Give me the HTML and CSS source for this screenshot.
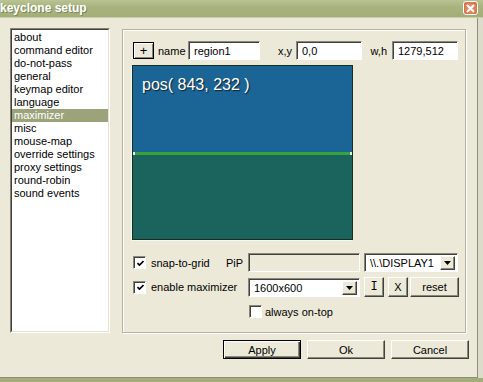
FILE: index.html
```html
<!DOCTYPE html>
<html>
<head>
    <title>keyclone setup</title>
    <link rel="stylesheet" href="styles.css">
</head>
<body>

<div class="window">
    <div class="titlebar">
        <span class="title">keyclone setup</span>
        <span class="close">
            <svg width="9" height="9" viewBox="0 0 9 9"><path d="M1 1 L8 8 M8 1 L1 8" stroke="#fff" stroke-width="2"/></svg>
        </span>
    </div>

    <div class="client">
        <div class="main">
            <div class="pages">
                <ul class="pages-inner">
                    <li>about</li>
                    <li>command editor</li>
                    <li>do-not-pass</li>
                    <li>general</li>
                    <li>keymap editor</li>
                    <li>language</li>
                    <li class="selected">maximizer</li>
                    <li>misc</li>
                    <li>mouse-map</li>
                    <li>override settings</li>
                    <li>proxy settings</li>
                    <li>round-robin</li>
                    <li>sound events</li>
                </ul>
            </div>

            <div class="group">
                <div class="toprow">
                    <button class="btn plus">+</button>
                    <span class="lbl lbl-name">name</span>
                    <input class="field w-name" type="text" value="region1">
                    <span class="lbl lbl-xy">x,y</span>
                    <input class="field w-small" type="text" value="0,0">
                    <span class="lbl lbl-wh">w,h</span>
                    <input class="field w-small" type="text" value="1279,512">
                </div>

                <div class="canvas">
                    <div class="region-top">
                        <span class="pos">pos( 843, 232 )</span>
                    </div>
                    <div class="splitter"></div>
                    <div class="region-bottom"></div>
                </div>

                <div class="ctrlrow row1">
                    <div class="leftcol">
                        <span class="check on"><svg width="7" height="7" viewBox="0 0 7 7"><path d="M0.5 3 L2.5 5 L6.5 1" stroke="#000" stroke-width="1.6" fill="none"/></svg></span>
                        <span class="checklabel">snap-to-grid</span>
                        <span class="pip">PiP</span>
                    </div>
                    <div class="field disabled w-mid"></div>
                    <div class="combo w-display">
                        <span class="combo-text">\\.\DISPLAY1</span>
                        <span class="combo-btn"><svg width="7" height="4" viewBox="0 0 7 4"><path d="M0 0 H7 L3.5 4 Z" fill="#000"/></svg></span>
                    </div>
                </div>

                <div class="ctrlrow row2">
                    <div class="leftcol">
                        <span class="check on"><svg width="7" height="7" viewBox="0 0 7 7"><path d="M0.5 3 L2.5 5 L6.5 1" stroke="#000" stroke-width="1.6" fill="none"/></svg></span>
                        <span class="checklabel">enable maximizer</span>
                    </div>
                    <div class="combo w-mid">
                        <span class="combo-text">1600x600</span>
                        <span class="combo-btn"><svg width="7" height="4" viewBox="0 0 7 4"><path d="M0 0 H7 L3.5 4 Z" fill="#000"/></svg></span>
                    </div>
                    <button class="btn small mono">I</button>
                    <button class="btn small">X</button>
                    <button class="btn reset">reset</button>
                </div>

                <div class="ctrlrow row3">
                    <span class="check"></span>
                    <span class="checklabel">always on-top</span>
                </div>
            </div>
        </div>

        <div class="actions">
            <button class="btn action default">Apply</button>
            <button class="btn action">Ok</button>
            <button class="btn action">Cancel</button>
        </div>
    </div>
</div>

</body>
</html>
```

FILE: styles.css
```css
* {
    box-sizing: border-box;
}

body {
    margin: 0;
    font-family: "Liberation Sans", Arial, sans-serif;
    font-size: 11px;
    color: #000;
    background: #dcdccb;
}

.window {
    width: 483px;
    height: 382px;
    display: flex;
    flex-direction: column;
    background: linear-gradient(to bottom, #dcdccb 378px, #a2ad77 378px);
}

.titlebar {
    height: 18px;
    display: flex;
    align-items: center;
    justify-content: space-between;
    background: linear-gradient(#b9c393, #a9b37f 40%, #a2ad77);
    border-bottom: 1px solid #c9d0ab;
}

.title {
    color: #fff;
    font-weight: bold;
    font-size: 12px;
    text-shadow: 1px 1px 0 #7d8857;
    margin-top: -1px;
}

.close {
    width: 15px;
    height: 14px;
    margin-right: 5px;
    margin-top: -1px;
    border: 1px solid #fff;
    border-radius: 3px;
    background: radial-gradient(#eea17c, #d3633d);
    display: flex;
    align-items: center;
    justify-content: center;
}

.client {
    width: 478px;
    height: 360px;
    background: #ece9d8;
    border-right: 1px solid #8f8d7c;
    border-bottom: 1px solid #8f8d7c;
    padding: 10px 0 0 10px;
}

.main {
    display: flex;
    gap: 12px;
    height: 305px;
}

/* page list */
.pages {
    width: 100px;
    height: 305px;
    border: 1px solid;
    border-color: #848270 #fff #fff #848270;
}

.pages-inner {
    list-style: none;
    margin: 0;
    padding: 1px 0 0 0;
    height: 100%;
    background: #fff;
    border: 1px solid;
    border-color: #404040 #e4e1d0 #e4e1d0 #404040;
}

.pages-inner li {
    line-height: 13px;
    height: 13px;
    padding-left: 2px;
    white-space: nowrap;
}

.pages-inner li.selected {
    background: #9ca37a;
    color: #fff;
}

/* group box */
.group {
    width: 344px;
    height: 304px;
    margin-top: 1px;
    border: 1px solid #b5b29f;
    box-shadow: 1px 1px 0 #fff, inset 1px 1px 0 #fff;
    padding: 11px 0 0 9px;
}

.toprow {
    display: flex;
    align-items: center;
    height: 19px;
}

.lbl {
    display: inline-block;
}

.lbl-name {
    width: 34px;
    padding-left: 4px;
}

.lbl-xy {
    width: 36px;
    text-align: right;
    padding-right: 4px;
}

.lbl-wh {
    width: 30px;
    text-align: right;
    padding-right: 5px;
}

.field {
    height: 19px;
    border: 1px solid;
    border-color: #8a8876 #fff #fff #8a8876;
    box-shadow: inset 1px 1px 0 #404040;
    background: #fff;
    font-family: inherit;
    font-size: 11px;
    padding: 1px 0 0 5px;
    margin: 0;
    outline: none;
}

.w-name {
    width: 72px;
}

.w-small {
    width: 66px;
}

.w-mid {
    width: 112px;
}

.field.disabled {
    background: #ece9d8;
}

/* buttons */
.btn {
    font-family: inherit;
    font-size: 11px;
    color: #000;
    background: #ece9d8;
    border: 1px solid;
    border-color: #fff #404040 #404040 #fff;
    box-shadow: inset -1px -1px 0 #8a8876;
    padding: 0;
    margin: 0;
}

.plus {
    width: 21px;
    height: 17px;
    margin-left: 1px;
    border-color: #000;
    box-shadow: inset 1px 1px 0 #fff, inset -1px -1px 0 #8a8876;
    font-size: 13px;
    line-height: 13px;
}

.small {
    width: 20px;
    height: 20px;
    margin-left: 4px;
}

.mono {
    font-family: "Liberation Mono", monospace;
    font-size: 12px;
}

.reset {
    width: 49px;
    height: 20px;
    margin-left: 2px;
}

.action {
    width: 78px;
    height: 19px;
}

.default {
    border-color: #000;
    box-shadow: inset 1px 1px 0 #fff, inset -1px -1px 0 #404040, inset -2px -2px 0 #8a8876;
}

/* canvas */
.canvas {
    width: 221px;
    height: 175px;
    margin-top: 5px;
    border: 1px solid #14301f;
    box-shadow: -1px 1px 0 #f4f7ee;
    display: flex;
    flex-direction: column;
}

.region-top {
    height: 86px;
    background: #1b6496;
    padding: 10px 0 0 9px;
}

.pos {
    color: #fff;
    font-family: "Liberation Sans", Arial, sans-serif;
    font-size: 16px;
    line-height: 18px;
    text-shadow: 1px 1px 1px #10202c;
}

.splitter {
    height: 3px;
    background: #36a23a;
    display: flex;
    justify-content: space-between;
    align-items: center;
}

.splitter::before,
.splitter::after {
    content: "";
    width: 2px;
    height: 3px;
    background: #e9f4e6;
}

.region-bottom {
    flex: 1;
    background: #1b645d;
}

/* bottom controls */
.ctrlrow {
    display: flex;
    align-items: center;
}

.row1 {
    margin-top: 13px;
    height: 19px;
}

.row2 {
    margin-top: 5px;
    height: 20px;
}

.row3 {
    margin-top: 8px;
    margin-left: 117px;
}

.leftcol {
    width: 116px;
    display: flex;
    align-items: center;
    padding-left: 1px;
}

.check {
    width: 13px;
    height: 13px;
    background: #fff;
    border: 1px solid;
    border-color: #8a8876 #fff #fff #8a8876;
    box-shadow: inset 1px 1px 0 #404040;
    display: flex;
    align-items: center;
    justify-content: center;
    flex: none;
}

.check svg {
    margin: 1px 0 0 1px;
}

.checklabel {
    margin-left: 5px;
    white-space: nowrap;
}

.row3 .checklabel {
    margin-left: 3px;
}

.pip {
    margin-left: auto;
    padding-right: 5px;
}

.combo {
    height: 19px;
    display: flex;
    align-items: stretch;
    background: #fff;
    border: 1px solid;
    border-color: #8a8876 #fff #fff #8a8876;
    box-shadow: inset 1px 1px 0 #404040;
    padding: 2px 2px 1px 2px;
}

.row1 .combo {
    margin-left: 4px;
}

.w-display {
    width: 94px;
}

.combo-text {
    flex: 1;
    padding-left: 3px;
    line-height: 14px;
    white-space: nowrap;
}

.combo-btn {
    width: 15px;
    background: #ece9d8;
    border: 1px solid;
    border-color: #fff #404040 #404040 #fff;
    box-shadow: inset -1px -1px 0 #8a8876;
    display: flex;
    align-items: center;
    justify-content: center;
}

.actions {
    display: flex;
    justify-content: flex-end;
    gap: 6px;
    margin-top: 7px;
    padding-right: 8px;
}
```
